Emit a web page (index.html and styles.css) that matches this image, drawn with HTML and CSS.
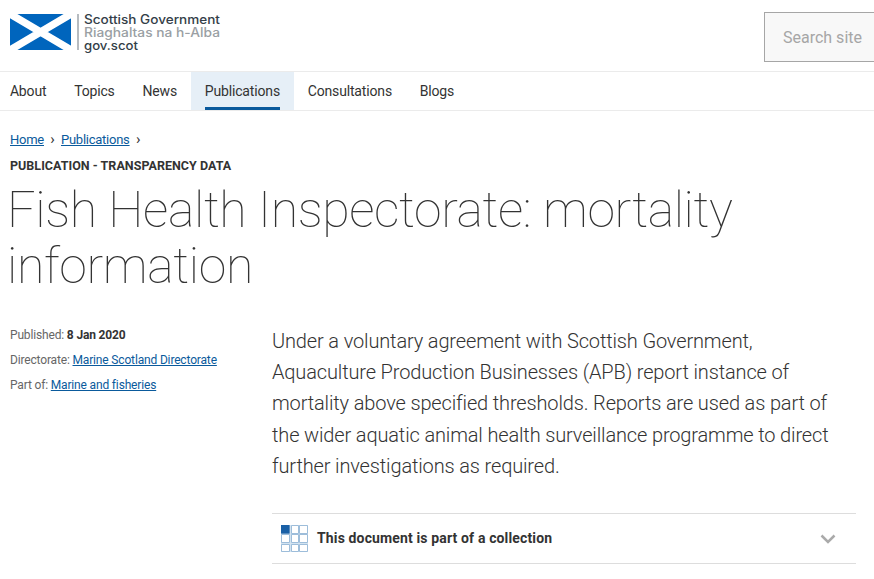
FILE: index.html
```
<!DOCTYPE html>
<html lang="en">
<head>
    <meta charset="UTF-8">
    <meta name="viewport" content="width=device-width, initial-scale=1.0">
    <title>Fish Health Inspectorate: mortality information - gov.scot</title>
    <link rel="stylesheet" href="styles.css">
</head>
<body>
    <header class="site-header">
        <a class="site-logo" href="#">
            <svg width="222" height="46" viewBox="0 0 222 46">
                <rect x="0" y="4" width="61" height="36" fill="#0065bd"/>
                <path d="M0 4L61 40M61 4L0 40" stroke="#fff" stroke-width="7.5"/>
                <path d="M68 4v36" stroke="#8f979e" stroke-width="1.3"/>
                <text class="logo-name" x="74" y="14" textLength="136" lengthAdjust="spacingAndGlyphs">Scottish Government</text>
                <text class="logo-gaelic" x="74" y="27" textLength="136" lengthAdjust="spacingAndGlyphs">Riaghaltas na h-Alba</text>
                <text class="logo-name" x="74" y="40" textLength="54" lengthAdjust="spacingAndGlyphs">gov.scot</text>
            </svg>
        </a>
        <form class="site-search">
            <input class="search-input" type="text" placeholder="Search site">
        </form>
    </header>

    <nav class="main-nav">
        <ul>
            <li><a href="#"><span>About</span></a></li>
            <li><a href="#"><span>Topics</span></a></li>
            <li><a href="#"><span>News</span></a></li>
            <li><a href="#" class="current"><span>Publications</span></a></li>
            <li><a href="#"><span>Consultations</span></a></li>
            <li><a href="#"><span>Blogs</span></a></li>
        </ul>
    </nav>

    <main class="page">
        <div class="breadcrumbs">
            <a href="#">Home</a><span>›</span><a href="#">Publications</a><span>›</span>
        </div>
        <p class="page-label">Publication - Transparency data</p>
        <h1 class="page-title">Fish Health Inspectorate: mortality information</h1>

        <div class="page-body">
            <dl class="metadata">
                <div><dt>Published:</dt> <dd class="date">8 Jan 2020</dd></div>
                <div><dt>Directorate:</dt> <dd><a href="#">Marine Scotland Directorate</a></dd></div>
                <div><dt>Part of:</dt> <dd><a href="#">Marine and fisheries</a></dd></div>
            </dl>

            <div class="content">
                <p class="leader">Under a voluntary agreement with Scottish Government, Aquaculture Production Businesses (APB) report instance of mortality above specified thresholds. Reports are used as part of the wider aquatic animal health surveillance programme to direct further investigations as required.</p>

                <div class="collection">
                    <svg width="28" height="28" viewBox="0 0 28 28">
                        <rect width="27" height="27" fill="#d3e3f0"/>
                        <g fill="#fff" stroke="#9dbdda">
                            <path d="M.5.5h8v8h-8zM10.500.5h7v8h-7zM18.500.5h8v8h-8z"/>
                            <path d="M.5 9.500h8v8h-8zM10.500 9.500h7v8h-7zM18.500 9.500h8v8h-8z"/>
                            <path d="M.5 19.500h8v7h-8zM10.500 19.500h7v7h-7zM18.500 19.500h8v7h-8z"/>
                        </g>
                        <rect width="8.500" height="8.500" fill="#1a60a6"/>
                    </svg>
                    <span class="collection-title">This document is part of a collection</span>
                    <svg class="chevron" width="16" height="12" viewBox="0 0 16 12">
                        <path d="M1.500 2.500L8 9l6.500-6.500" fill="none" stroke="#aaa" stroke-width="2.500"/>
                    </svg>
                </div>
            </div>
        </div>
    </main>
</body>
</html>
```

FILE: styles.css
```
* {
    box-sizing: border-box;
}

body {
    margin: 0;
    background: #fff;
    color: #333;
    font-family: Roboto, sans-serif;
    font-size: 14px;
    overflow: hidden;
}

a {
    color: #0a5a9c;
}

.site-header {
    display: flex;
    justify-content: space-between;
    height: 71px;
    padding: 10px 0 0 10px;
}

.site-logo svg {
    display: block;
}

.logo-name,
.logo-gaelic {
    font-family: Inter, sans-serif;
    font-size: 12.5px;
    font-weight: 500;
    fill: #333e48;
}

.logo-gaelic {
    fill: #9a9fa4;
}

.site-search {
    width: 110px;
    margin-top: 2px;
}

.search-input {
    display: block;
    width: 110px;
    height: 50px;
    padding: 0 0 0 18px;
    border: 1px solid #a6a6a6;
    border-right: 0;
    border-radius: 0;
    background: #f8f8f8;
    font-family: Roboto, sans-serif;
    font-size: 16px;
}

.search-input::placeholder {
    color: #a6a6a6;
}

.main-nav {
    height: 40px;
    border-top: 1px solid #ebebeb;
    border-bottom: 1px solid #ebebeb;
}

.main-nav ul {
    display: flex;
    margin: 0 0 0 -4px;
    padding: 0;
    list-style: none;
}

.main-nav a {
    display: block;
    height: 38px;
    padding: 0 13.9px;
    color: #333;
    letter-spacing: -0.16px;
    line-height: 38px;
    text-decoration: none;
}

.main-nav span {
    display: block;
    height: 38px;
}

.main-nav .current {
    background: #e6eff7;
}

.main-nav .current span {
    border-bottom: 3px solid #0a5a9c;
}

.page {
    padding: 20px 18px 0 10px;
}

.breadcrumbs {
    display: flex;
    font-size: 13px;
    letter-spacing: -0.25px;
    line-height: 18px;
}

.breadcrumbs span {
    width: 17px;
    font-size: 15px;
    line-height: 16px;
    text-align: center;
}

.page-label {
    margin: 8px 0 0;
    font-size: 12.5px;
    font-weight: 700;
    letter-spacing: 0.03px;
    line-height: 18px;
    text-transform: uppercase;
}

.page-title {
    width: 760px;
    margin: 7px 0 0 -3px;
    font-size: 50px;
    font-weight: 100;
    letter-spacing: -0.36px;
    line-height: 56px;
}

.page-body {
    display: flex;
    margin-top: 29px;
}

.metadata {
    width: 262px;
    margin: 0;
    font-size: 12px;
    letter-spacing: -0.16px;
    line-height: 25px;
}

.metadata dt,
.metadata dd {
    display: inline;
    margin: 0;
}

.metadata dt {
    color: #666;
}

.metadata .date {
    font-weight: 700;
}

.content {
    width: 584px;
}

.leader {
    margin: 3px 0 31px;
    font-size: 20px;
    font-weight: 300;
    letter-spacing: -0.145px;
    line-height: 31.2px;
}

.collection {
    display: flex;
    align-items: center;
    height: 51px;
    padding: 0 20px 0 9px;
    border-top: 1px solid #ddd;
    border-bottom: 1px solid #ddd;
}

.collection-title {
    margin: -2px 0 0 8px;
    font-weight: 700;
    letter-spacing: 0.14px;
}

.chevron {
    margin-left: auto;
}
```
